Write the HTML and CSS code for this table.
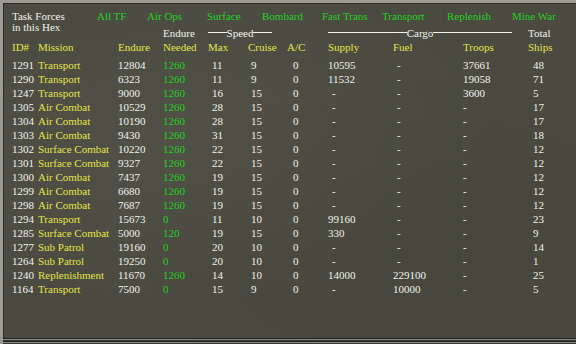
FILE: index.html
```html
<!DOCTYPE html>
<html>
<head>
<meta charset="utf-8">
<link rel="stylesheet" href="styles.css">
</head>
<body>
<div class="panel">
  <div class="top">
    <div class="title">Task Forces<br>in this Hex</div>
    <div class="tabs">
      <span class="tab t1">All TF</span>
      <span class="tab t2">Air Ops</span>
      <span class="tab t3">Surface</span>
      <span class="tab t4">Bombard</span>
      <span class="tab t5">Fast Trans</span>
      <span class="tab t6">Transport</span>
      <span class="tab t7">Replenish</span>
      <span class="tab t8">Mine War</span>
    </div>
  </div>
  <div class="row group">
    <span class="c-needed">Endure</span>
    <span class="c-speed span-speed"><i class="rule"></i><span>Speed</span><i class="rule"></i></span>
    <span class="c-cargo span-cargo"><i class="rule"></i><span>Cargo</span><i class="rule"></i></span>
    <span class="c-ships">Total</span>
  </div>
  <div class="row head">
    <span>ID#</span><span>Mission</span><span>Endure</span><span>Needed</span><span>Max</span><span>Cruise</span><span>A/C</span><span>Supply</span><span>Fuel</span><span>Troops</span><span>Ships</span>
  </div>
  <div class="body">
    <div class="row data"><span>1291</span><span class="m">Transport</span><span>12804</span><span class="g">1260</span><span class="mx">11</span><span class="cr">9</span><span class="ac">0</span><span>10595</span><span class="d">-</span><span>37661</span><span class="sh">48</span></div>
    <div class="row data"><span>1290</span><span class="m">Transport</span><span>6323</span><span class="g">1260</span><span class="mx">11</span><span class="cr">9</span><span class="ac">0</span><span>11532</span><span class="d">-</span><span>19058</span><span class="sh">71</span></div>
    <div class="row data"><span>1247</span><span class="m">Transport</span><span>9000</span><span class="g">1260</span><span class="mx">16</span><span class="cr">15</span><span class="ac">0</span><span class="d">-</span><span class="d">-</span><span>3600</span><span class="sh">5</span></div>
    <div class="row data"><span>1305</span><span class="m">Air Combat</span><span>10529</span><span class="g">1260</span><span class="mx">28</span><span class="cr">15</span><span class="ac">0</span><span class="d">-</span><span class="d">-</span><span class="dt">-</span><span class="sh">17</span></div>
    <div class="row data"><span>1304</span><span class="m">Air Combat</span><span>10190</span><span class="g">1260</span><span class="mx">28</span><span class="cr">15</span><span class="ac">0</span><span class="d">-</span><span class="d">-</span><span class="dt">-</span><span class="sh">17</span></div>
    <div class="row data"><span>1303</span><span class="m">Air Combat</span><span>9430</span><span class="g">1260</span><span class="mx">31</span><span class="cr">15</span><span class="ac">0</span><span class="d">-</span><span class="d">-</span><span class="dt">-</span><span class="sh">18</span></div>
    <div class="row data"><span>1302</span><span class="m">Surface Combat</span><span>10220</span><span class="g">1260</span><span class="mx">22</span><span class="cr">15</span><span class="ac">0</span><span class="d">-</span><span class="d">-</span><span class="dt">-</span><span class="sh">12</span></div>
    <div class="row data"><span>1301</span><span class="m">Surface Combat</span><span>9327</span><span class="g">1260</span><span class="mx">22</span><span class="cr">15</span><span class="ac">0</span><span class="d">-</span><span class="d">-</span><span class="dt">-</span><span class="sh">12</span></div>
    <div class="row data"><span>1300</span><span class="m">Air Combat</span><span>7437</span><span class="g">1260</span><span class="mx">19</span><span class="cr">15</span><span class="ac">0</span><span class="d">-</span><span class="d">-</span><span class="dt">-</span><span class="sh">12</span></div>
    <div class="row data"><span>1299</span><span class="m">Air Combat</span><span>6680</span><span class="g">1260</span><span class="mx">19</span><span class="cr">15</span><span class="ac">0</span><span class="d">-</span><span class="d">-</span><span class="dt">-</span><span class="sh">12</span></div>
    <div class="row data"><span>1298</span><span class="m">Air Combat</span><span>7687</span><span class="g">1260</span><span class="mx">19</span><span class="cr">15</span><span class="ac">0</span><span class="d">-</span><span class="d">-</span><span class="dt">-</span><span class="sh">12</span></div>
    <div class="row data"><span>1294</span><span class="m">Transport</span><span>15673</span><span class="g">0</span><span class="mx">11</span><span class="cr">10</span><span class="ac">0</span><span>99160</span><span class="d">-</span><span class="dt">-</span><span class="sh">23</span></div>
    <div class="row data"><span>1285</span><span class="m">Surface Combat</span><span>5000</span><span class="g">120</span><span class="mx">19</span><span class="cr">15</span><span class="ac">0</span><span>330</span><span class="d">-</span><span class="dt">-</span><span class="sh">9</span></div>
    <div class="row data"><span>1277</span><span class="m">Sub Patrol</span><span>19160</span><span class="g">0</span><span class="mx">20</span><span class="cr">10</span><span class="ac">0</span><span class="d">-</span><span class="d">-</span><span class="dt">-</span><span class="sh">14</span></div>
    <div class="row data"><span>1264</span><span class="m">Sub Patrol</span><span>19250</span><span class="g">0</span><span class="mx">20</span><span class="cr">10</span><span class="ac">0</span><span class="d">-</span><span class="d">-</span><span class="dt">-</span><span class="sh">1</span></div>
    <div class="row data"><span>1240</span><span class="m">Replenishment</span><span>11670</span><span class="g">1260</span><span class="mx">14</span><span class="cr">10</span><span class="ac">0</span><span>14000</span><span>229100</span><span class="dt">-</span><span class="sh">25</span></div>
    <div class="row data"><span>1164</span><span class="m">Transport</span><span>7500</span><span class="g">0</span><span class="mx">15</span><span class="cr">9</span><span class="ac">0</span><span class="d">-</span><span>10000</span><span class="dt">-</span><span class="sh">5</span></div>
  </div>
  <div class="spacer"></div>
  <div class="bottom"></div>
</div>
</body>
</html>
```

FILE: styles.css
```css
html, body {
  margin: 0;
  padding: 0;
  background: #4a4a40;
}
.panel {
  width: 576px;
  height: 344px;
  box-sizing: border-box;
  background-color: #4a4a40;
  background-image:
    radial-gradient(ellipse at 30% 40%, rgba(255,255,240,0.035), transparent 60%),
    radial-gradient(ellipse at 75% 70%, rgba(0,0,0,0.06), transparent 55%);
  border-top: 3px solid #9c9c94;
  border-left: 3px solid #9c9c94;
  box-shadow: inset 1px 1px 0 #2c2c26;
  padding-left: 9px;
  padding-top: 7.5px;
  display: flex;
  flex-direction: column;
  font-family: "Liberation Serif", "Times New Roman", serif;
  font-size: 11px;
  color: #f2f2ec;
  overflow: hidden;
}
.top {
  display: flex;
  line-height: 11px;
}
.title {
  width: 85px;
  flex: none;
}
.tabs {
  display: flex;
  color: #22d022;
  height: 11px;
}
.tab { flex: none; }
.t1 { width: 50px; }
.t2 { width: 60px; }
.t3 { width: 55px; }
.t4 { width: 60px; }
.t5 { width: 60px; }
.t6 { width: 65px; }
.t7 { width: 65px; }
.row {
  display: grid;
  grid-template-columns: 26px 80px 45px 45px 40px 39px 41px 65px 70px 65px 1fr;
  height: 14px;
  line-height: 14px;
  white-space: nowrap;
}
.group {
  margin-top: -6.5px;
}
.group .c-needed { grid-column: 4; }
.group .c-speed { grid-column: 5 / span 2; }
.group .c-cargo { grid-column: 8 / span 3; }
.group .c-ships { grid-column: 11; }
.span-speed, .span-cargo {
  display: flex;
  align-items: center;
}
.span-speed { width: 64px; }
.span-cargo { width: 184px; }
.rule {
  flex: 1;
  height: 1px;
  background: #f2f2ec;
  margin-top: -1px;
}
.head {
  color: #e4e44a;
  margin-bottom: 4px;
}
.m { color: #e4e44a; }
.g { color: #22d022; }
.mx { padding-left: 4px; }
.cr { padding-left: 3px; }
.ac { padding-left: 6px; }
.sh { padding-left: 5px; }
.d { padding-left: 4px; }
.dt { padding-left: 0; }
.spacer { flex: 1; }
.bottom {
  height: 6px;
  margin-left: -12px;
  background: repeating-linear-gradient(180deg, #22221e 0 1px, #8a8a84 1px 2px, #3a3a34 2px 3px);
}
```
